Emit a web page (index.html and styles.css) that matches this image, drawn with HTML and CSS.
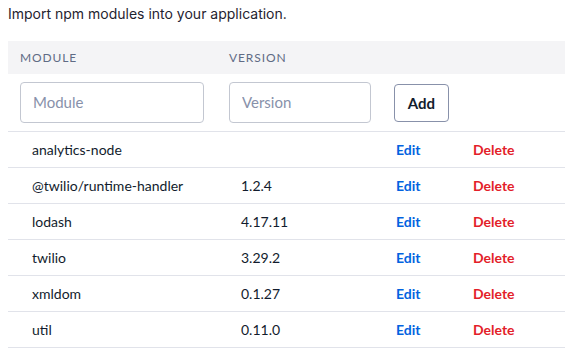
FILE: index.html
```html
<!DOCTYPE html>
<html lang="en">
<head>
    <meta charset="UTF-8">
    <title>Dependencies</title>
    <link rel="stylesheet" href="styles.css">
</head>
<body>
    <p class="intro">Import npm modules into your application.</p>
    <table class="deps">
        <thead>
            <tr>
                <th class="col-name">Module</th>
                <th class="col-version">Version</th>
                <th class="col-edit"></th>
                <th class="col-delete"></th>
            </tr>
        </thead>
        <tbody>
            <tr class="add-row">
                <td><input type="text" class="field name-field" placeholder="Module"></td>
                <td><input type="text" class="field version-field" placeholder="Version"></td>
                <td><button class="add-btn">Add</button></td>
                <td></td>
            </tr>
            <tr>
                <td class="cell">analytics-node</td>
                <td class="cell"></td>
                <td class="link-cell"><a class="edit">Edit</a></td>
                <td class="link-cell"><a class="delete">Delete</a></td>
            </tr>
            <tr>
                <td class="cell">@twilio/runtime-handler</td>
                <td class="cell">1.2.4</td>
                <td class="link-cell"><a class="edit">Edit</a></td>
                <td class="link-cell"><a class="delete">Delete</a></td>
            </tr>
            <tr>
                <td class="cell">lodash</td>
                <td class="cell">4.17.11</td>
                <td class="link-cell"><a class="edit">Edit</a></td>
                <td class="link-cell"><a class="delete">Delete</a></td>
            </tr>
            <tr>
                <td class="cell">twilio</td>
                <td class="cell">3.29.2</td>
                <td class="link-cell"><a class="edit">Edit</a></td>
                <td class="link-cell"><a class="delete">Delete</a></td>
            </tr>
            <tr>
                <td class="cell">xmldom</td>
                <td class="cell">0.1.27</td>
                <td class="link-cell"><a class="edit">Edit</a></td>
                <td class="link-cell"><a class="delete">Delete</a></td>
            </tr>
            <tr>
                <td class="cell">util</td>
                <td class="cell">0.11.0</td>
                <td class="link-cell"><a class="edit">Edit</a></td>
                <td class="link-cell"><a class="delete">Delete</a></td>
            </tr>
        </tbody>
    </table>
</body>
</html>
```
FILE: styles.css
```css
body {
    margin: 0;
    padding: 0 0 0 8px;
    background: #ffffff;
    font-family: "Lato", "Open Sans", sans-serif;
    color: #121c2d;
}

.intro {
    margin: 0;
    padding-top: 5px;
    height: 36px;
    font-family: "Inter", sans-serif;
    font-size: 14px;
    line-height: 18px;
    color: #1f2330;
}

.deps {
    width: 557px;
    border-collapse: collapse;
    table-layout: fixed;
}
.deps th, .deps td {
    box-sizing: border-box;
}

.col-name { width: 209px; }
.col-version { width: 165px; }
.col-edit { width: 79px; }
.col-delete { width: 104px; }

thead tr {
    background: #f4f4f6;
    height: 33px;
}
th {
    text-align: left;
    padding: 0 0 0 12px;
    font-weight: normal;
    font-size: 12px;
    letter-spacing: 0.9px;
    text-transform: uppercase;
    color: #606b85;
}

.add-row {
    height: 57px;
    border-bottom: 1px solid #e1e3ea;
}
.add-row td {
    padding: 0 0 0 12px;
    vertical-align: middle;
}
.field {
    box-sizing: border-box;
    height: 41px;
    border: 1px solid #c3c7d1;
    border-radius: 4px;
    padding: 0 12px;
    font-family: "Lato", sans-serif;
    font-size: 15px;
    color: #121c2d;
    outline: none;
}
.field::placeholder { color: #8891aa; }
.name-field { width: 184px; }
.version-field { width: 142px; }

.add-btn {
    box-sizing: border-box;
    width: 55px;
    height: 38px;
    margin-top: 1px;
    background: #ffffff;
    border: 1px solid #8891aa;
    border-radius: 4px;
    font-family: "Lato", sans-serif;
    font-weight: bold;
    font-size: 15px;
    color: #121c2d;
}

tbody tr {
    border-bottom: 1px solid #e1e3ea;
}
.cell, .link-cell {
    height: 36px;
    padding: 0;
    font-size: 14px;
}
.cell { padding-left: 24px; }
.link-cell { padding-left: 14px; }
.link-cell:last-child { padding-left: 12px; }

.edit, .delete {
    font-weight: bold;
    font-size: 14px;
    cursor: pointer;
}
.edit { color: #0263e0; }
.delete { color: #e31e2a; }
```
